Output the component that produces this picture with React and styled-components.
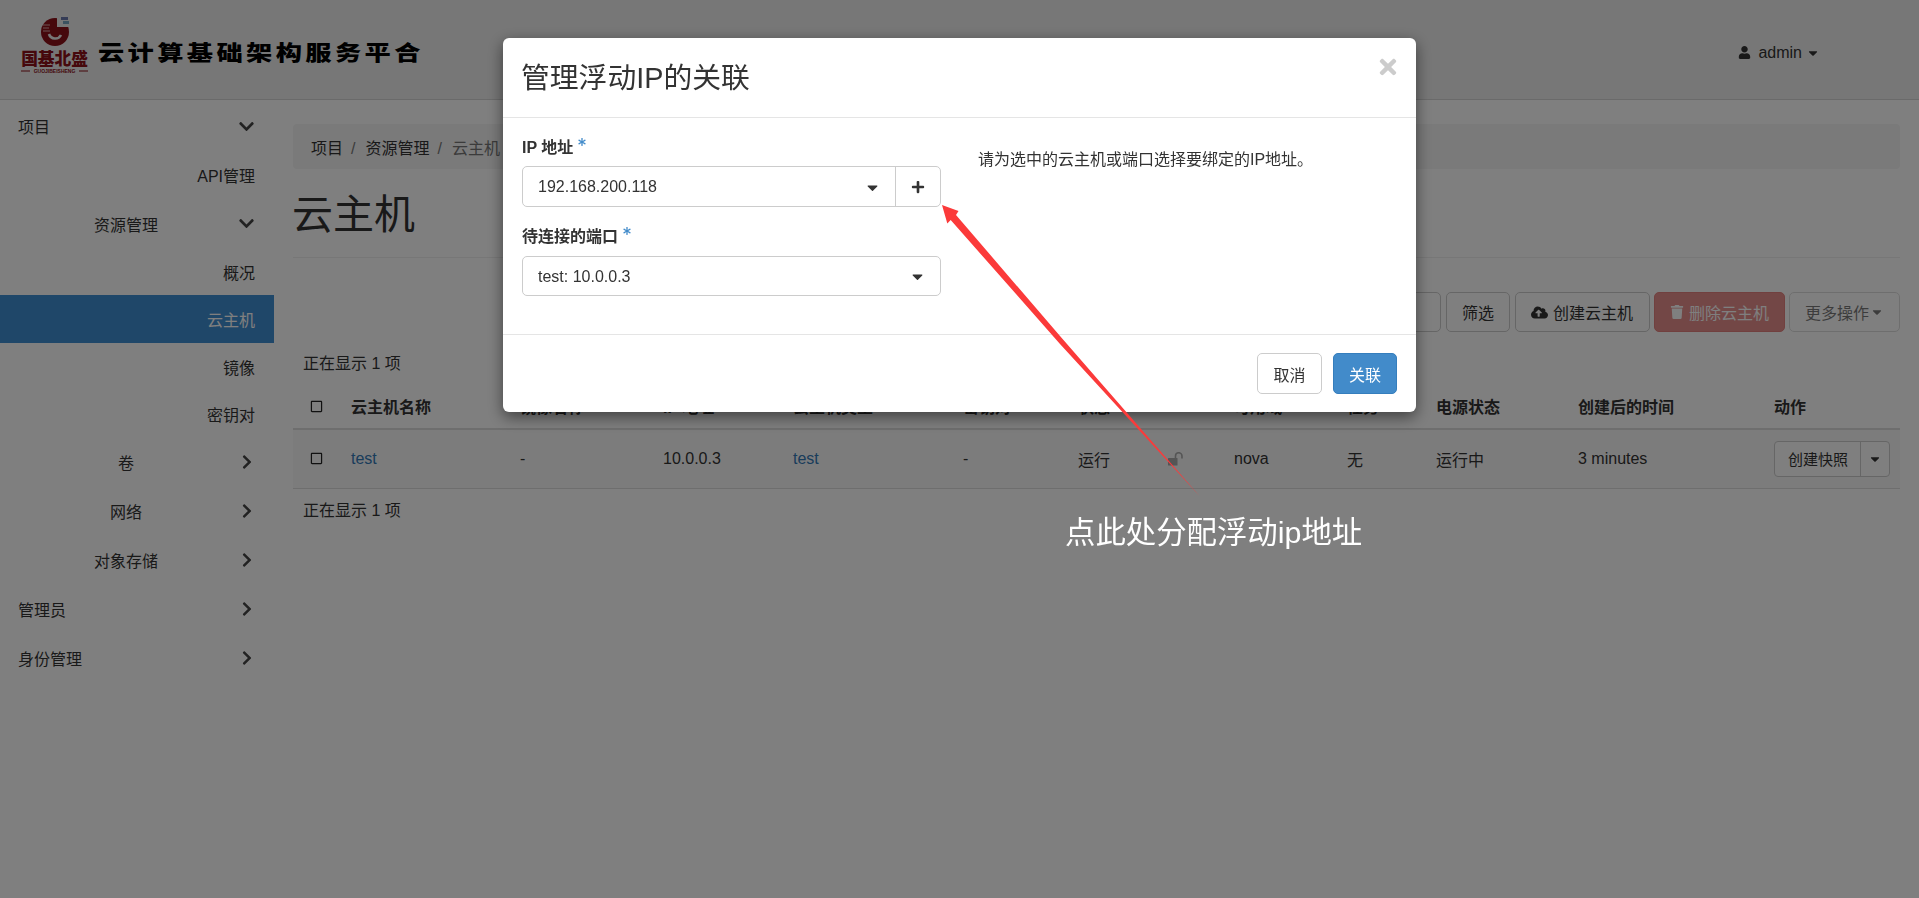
import React from 'react'
import styled, { createGlobalStyle } from 'styled-components'
import {
  FaAsterisk,
  FaCaretDown,
  FaChevronDown,
  FaChevronRight,
  FaCloudUploadAlt,
  FaPlus,
  FaRegSquare,
  FaTimes,
  FaTrash,
  FaUser,
} from 'react-icons/fa'

const GlobalStyle = createGlobalStyle`
  html, body {
    margin: 0;
    height: 100%;
    overflow: hidden;
    background: #fff;
  }
  body {
    font-family: "Liberation Sans", "Noto Sans CJK SC", sans-serif;
    font-size: 16px;
    color: #333;
  }
  * { box-sizing: border-box; }
`

const menu = [
  { label: '项目', level: 0, open: true, h: 48 },
  { label: 'API管理', level: 2, h: 49 },
  { label: '资源管理', level: 1, open: true, h: 49 },
  { label: '概况', level: 2, h: 47 },
  { label: '云主机', level: 2, h: 48, active: true },
  { label: '镜像', level: 2, h: 47 },
  { label: '密钥对', level: 2, h: 47 },
  { label: '卷', level: 1, h: 49 },
  { label: '网络', level: 1, h: 49 },
  { label: '对象存储', level: 1, h: 49 },
  { label: '管理员', level: 0, h: 49 },
  { label: '身份管理', level: 0, h: 50 },
]

const columns = [
  { label: '云主机名称', w: 169 },
  { label: '镜像名称', w: 143 },
  { label: 'IP 地址', w: 130 },
  { label: '云主机类型', w: 170 },
  { label: '密钥对', w: 115 },
  { label: '状态', w: 95 },
  { label: '', w: 61 },
  { label: '可用域', w: 113 },
  { label: '任务', w: 89 },
  { label: '电源状态', w: 142 },
  { label: '创建后的时间', w: 196 },
  { label: '动作', w: 134 },
]

function Logo() {
  return (
    <LogoSvg viewBox="0 0 72 60" width="72" height="60">
      <circle cx="37" cy="17" r="14" fill="#8c1018" />
      <path d="M39 2 h14 v10 h-14z" fill="#eee" />
      <path d="M31 19 A6.5 6.5 0 0 0 43 20" fill="none" stroke="#eee" strokeWidth="2.6" />
      <path d="M25 10 h7 M25 13 h6 M25 16 h7" stroke="#d8a8a8" strokeWidth="1.1" />
      <path d="M43 2 h7 v3 h-7z" fill="#6a78ac" />
      <path d="M45 6 h6 v3 h-6z" fill="#78a4c0" />
      <text x="36.5" y="50" textAnchor="middle" fontSize="16.7" fontWeight="900" fill="#8c1018">国基北盛</text>
      <path d="M3 56 h9 M61 56 h9" stroke="#8c1018" strokeWidth="1" />
      <text x="36.5" y="58" textAnchor="middle" fontSize="5" fontWeight="700" fill="#8c1018">GUOJIBEISHENG</text>
    </LogoSvg>
  )
}

function UnlockIcon() {
  return (
    <LockSvg viewBox="0 0 16 14" width="16" height="14">
      <rect x="0" y="6" width="9.5" height="7.5" rx="0.5" fill="currentColor" />
      <path d="M7.5 6 V4 A3.2 3.2 0 0 1 14 4 V6.5" fill="none" stroke="currentColor" strokeWidth="1.6" />
    </LockSvg>
  )
}

function App() {
  return (
    <Page>
      <GlobalStyle />
      <Header>
        <Brand>
          <Logo />
          <BrandName>云计算基础架构服务平合</BrandName>
        </Brand>
        <UserMenu>
          <UserIcon size={13} />
          admin
          <FaCaretDown size={14} />
        </UserMenu>
      </Header>

      <Body>
        <Sidebar>
          {menu.map((item) => (
            <MenuItem key={item.label} $h={item.h} $active={item.active}>
              <MenuLabel $level={item.level}>{item.label}</MenuLabel>
              {item.level < 2 && (
                <MenuChevron>
                  {item.open ? <FaChevronDown size={17} /> : <FaChevronRight size={16} />}
                </MenuChevron>
              )}
            </MenuItem>
          ))}
        </Sidebar>

        <Main>
          <Breadcrumb>
            <Crumb>项目</Crumb>
            <Crumb>资源管理</Crumb>
            <Crumb $last>云主机</Crumb>
          </Breadcrumb>
          <PageTitle>云主机</PageTitle>

          <Toolbar>
            <SearchInput />
            <Button $after={1}>筛选</Button>
            <Button $right={16}><FaCloudUploadAlt size={17} />创建云主机</Button>
            <Button $danger><FaTrash size={14} />删除云主机</Button>
            <Button $disabled $gap={1}>更多操作<FaCaretDown size={14} /></Button>
          </Toolbar>

          <Summary>正在显示 1 项</Summary>
          <Table>
            <thead>
              <tr>
                <CheckCell as="th"><FaRegSquare size={13} /></CheckCell>
                {columns.map((col) => (
                  <HeadCell key={col.label + col.w} style={{ width: col.w }}>{col.label}</HeadCell>
                ))}
              </tr>
            </thead>
            <tbody>
              <Row>
                <CheckCell><FaRegSquare size={13} /></CheckCell>
                <Cell><CellLink>test</CellLink></Cell>
                <Cell>-</Cell>
                <Cell>10.0.0.3</Cell>
                <Cell><CellLink>test</CellLink></Cell>
                <Cell>-</Cell>
                <Cell>运行</Cell>
                <Cell><UnlockIcon /></Cell>
                <Cell>nova</Cell>
                <Cell>无</Cell>
                <Cell>运行中</Cell>
                <Cell>3 minutes</Cell>
                <Cell>
                  <SplitButton>
                    <SplitMain>创建快照</SplitMain>
                    <SplitCaret><FaCaretDown size={14} /></SplitCaret>
                  </SplitButton>
                </Cell>
              </Row>
            </tbody>
          </Table>
          <Summary $below>正在显示 1 项</Summary>
        </Main>
      </Body>

      <Backdrop />

      <Modal>
        <ModalHeader>
          <ModalTitle>管理浮动IP的关联</ModalTitle>
          <CloseIcon size={24} />
        </ModalHeader>
        <ModalBody>
          <FormColumn>
            <FieldLabel>IP 地址<Star size={8} /></FieldLabel>
            <SelectGroup>
              <SelectBox>
                192.168.200.118
                <FaCaretDown size={17} />
              </SelectBox>
              <AddButton><FaPlus size={14} /></AddButton>
            </SelectGroup>
            <FieldLabel $second>待连接的端口<Star size={8} /></FieldLabel>
            <SelectGroup $short>
              <SelectBox>
                test: 10.0.0.3
                <FaCaretDown size={17} />
              </SelectBox>
            </SelectGroup>
          </FormColumn>
          <HelpText>请为选中的云主机或端口选择要绑定的IP地址。</HelpText>
        </ModalBody>
        <ModalFooter>
          <FooterButton>取消</FooterButton>
          <FooterButton $primary>关联</FooterButton>
        </ModalFooter>
      </Modal>

      <ArrowSvg width="1919" height="898" viewBox="0 0 1919 898">
        <polygon
          points="942,205 958.5,211 956,215 1060,336 1199.5,496 1060,344 950.7,220 947.3,223.5"
          fill="#fb3a3a"
        />
      </ArrowSvg>
      <Annotation>点此处分配浮动ip地址</Annotation>
    </Page>
  )
}

const Page = styled.div`
  min-height: 100vh;
`

const Header = styled.header`
  height: 100px;
  display: flex;
  align-items: center;
  justify-content: space-between;
  padding: 0 99px 0 18px;
  background: #eee;
  border-bottom: 1px solid #d5d5d5;
`

const Brand = styled.div`
  display: flex;
  align-items: center;
  gap: 9px;
`

const LogoSvg = styled.svg`
  display: block;
  margin-top: -9px;
`

const BrandName = styled.span`
  display: inline-block;
  font-family: "Noto Sans CJK SC", sans-serif;
  font-size: 21px;
  font-weight: 900;
  letter-spacing: 2.7px;
  color: #000;
  margin-top: 3px;
  margin-left: -1px;
  transform: scaleX(1.25);
  transform-origin: left center;
`

const UserMenu = styled.div`
  display: flex;
  align-items: center;
  gap: 4px;
  margin-top: 6px;
  color: #333;
`

const UserIcon = styled(FaUser)`
  margin-right: 3px;
`

const Body = styled.div`
  display: flex;
`

const Sidebar = styled.nav`
  width: 274px;
  flex-shrink: 0;
  padding-top: 2px;
`

const MenuItem = styled.div`
  height: ${(p) => p.$h}px;
  display: flex;
  align-items: center;
  padding: 0 19px 0 18px;
  color: ${(p) => (p.$active ? '#fff' : '#333')};
  background: ${(p) => (p.$active ? '#3e8ed2' : 'transparent')};
`

const MenuLabel = styled.span`
  flex: 1;
  text-align: ${(p) => (p.$level === 2 ? 'right' : p.$level === 1 ? 'center' : 'left')};
  padding-right: ${(p) => (p.$level === 1 ? '4px' : '0')};
`

const MenuChevron = styled.span`
  display: flex;
  width: 17px;
  justify-content: center;
  color: #444;
`

const Main = styled.main`
  flex: 1;
  min-width: 0;
  padding: 24px 19px 0;
`

const Breadcrumb = styled.div`
  height: 45px;
  display: flex;
  align-items: center;
  gap: 10px;
  padding: 0 18px;
  background: #f5f5f5;
  border-radius: 4px;
`

const Crumb = styled.span`
  color: ${(p) => (p.$last ? '#777' : '#333')};
  ${(p) => !p.$last && `
    &::after {
      content: '/';
      color: #777;
      margin-left: 8px;
    }
  `}
`

const PageTitle = styled.h1`
  margin: 21px 0 0;
  height: 68px;
  font-size: 41px;
  font-weight: 400;
  line-height: 50px;
  text-indent: -1px;
  color: #333;
  border-bottom: 1px solid #eee;
`

const Toolbar = styled.div`
  margin-top: 34px;
  display: flex;
  justify-content: flex-end;
  gap: 4px;
`

const SearchInput = styled.div`
  width: 240px;
  height: 40px;
  margin-right: 1px;
  border: 1px solid #ccc;
  border-radius: 5px;
  background: #fff;
`

const Button = styled.div`
  height: 40px;
  display: flex;
  align-items: center;
  gap: ${(p) => p.$gap ?? 5}px;
  padding: 0 ${(p) => p.$right ?? 15}px 0 15px;
  margin-right: ${(p) => p.$after ?? 0}px;
  background: ${(p) => (p.$danger ? '#d9534f' : '#fff')};
  color: ${(p) => (p.$danger ? '#fff' : '#333')};
  border: 1px solid ${(p) => (p.$danger ? '#d43f3a' : '#ccc')};
  border-radius: 5px;
  opacity: ${(p) => (p.$danger || p.$disabled ? 0.65 : 1)};
`

const Summary = styled.div`
  height: 24px;
  line-height: 24px;
  padding-left: 10px;
  margin-top: ${(p) => (p.$below ? '10px' : '20px')};
`

const Table = styled.table`
  width: 100%;
  margin-top: 16px;
  border-collapse: collapse;
  table-layout: fixed;
`

const Cell = styled.td`
  height: 59px;
  padding: 0 8px;
  border-bottom: 1px solid #ddd;
  text-align: left;
  vertical-align: middle;
`

const HeadCell = styled.th`
  height: 37px;
  padding: 0 8px 8px;
  border-bottom: 2px solid #ddd;
  text-align: left;
  font-weight: 700;
  vertical-align: middle;
  white-space: nowrap;
`

const CheckCell = styled.td`
  width: 50px;
  padding: ${(p) => (p.as === 'th' ? '0 0 8px 17px' : '0 0 0 17px')};
  border-bottom: ${(p) => (p.as === 'th' ? '2px' : '1px')} solid #ddd;
  text-align: left;
  vertical-align: middle;
  color: #222;

  svg {
    display: block;
  }
`

const Row = styled.tr`
  background: #f9f9f9;
`

const CellLink = styled.span`
  color: #337ab7;
`

const LockSvg = styled.svg`
  display: block;
  margin-left: -5px;
  color: #aaa;
`

const SplitButton = styled.div`
  display: inline-flex;
  height: 36px;
  border: 1px solid #ccc;
  border-radius: 4px;
  background: #fff;
  font-size: 15px;
  white-space: nowrap;
`

const SplitMain = styled.span`
  display: flex;
  align-items: center;
  padding: 0 12px 0 13px;
  border-right: 1px solid #ccc;
`

const SplitCaret = styled.span`
  display: flex;
  align-items: center;
  padding: 0 7px;
`

const Backdrop = styled.div`
  position: fixed;
  inset: 0;
  background: rgba(0, 0, 0, 0.5);
`

const Modal = styled.div`
  position: fixed;
  top: 38px;
  left: 503px;
  width: 913px;
  height: 374px;
  display: flex;
  flex-direction: column;
  background: #fff;
  border-radius: 6px;
  box-shadow: 0 5px 15px rgba(0, 0, 0, 0.5);
`

const ModalHeader = styled.div`
  height: 80px;
  flex-shrink: 0;
  display: flex;
  align-items: center;
  justify-content: space-between;
  padding: 0 20px;
  border-bottom: 1px solid #e5e5e5;
`

const ModalTitle = styled.h4`
  margin: -4px 0 0 -2px;
  font-size: 28.8px;
  font-weight: 400;
  color: #333;
`

const CloseIcon = styled(FaTimes)`
  color: #ccc;
  margin: -22px -4px 0 0;
`

const ModalBody = styled.div`
  flex: 1;
  display: flex;
  padding: 20px 19px 0;
`

const FormColumn = styled.div`
  width: 419px;
  flex-shrink: 0;
`

const FieldLabel = styled.div`
  height: 20px;
  line-height: 20px;
  display: flex;
  align-items: flex-start;
  font-weight: 700;
  color: #333;
  margin-top: ${(p) => (p.$second ? '20px' : '0')};
`

const Star = styled(FaAsterisk)`
  color: #428bca;
  margin-left: 5px;
`

const SelectGroup = styled.div`
  margin-top: ${(p) => (p.$short ? '9px' : '8px')};
  height: ${(p) => (p.$short ? '40px' : '41px')};
  display: flex;
  border: 1px solid #ccc;
  border-radius: 5px;
  background: #fff;
`

const SelectBox = styled.div`
  flex: 1;
  display: flex;
  align-items: center;
  justify-content: space-between;
  padding: 1px 14px 0 15px;
  color: #333;
`

const AddButton = styled.div`
  width: 45px;
  display: flex;
  align-items: center;
  justify-content: center;
  border-left: 1px solid #ccc;
  color: #333;
`

const HelpText = styled.p`
  margin: 11px 0 0 37px;
  line-height: 22px;
  color: #333;
`

const ModalFooter = styled.div`
  height: 78px;
  flex-shrink: 0;
  display: flex;
  justify-content: flex-end;
  gap: 11px;
  padding: 18px 19px;
  border-top: 1px solid #e5e5e5;
`

const FooterButton = styled.div`
  width: ${(p) => (p.$primary ? '64px' : '65px')};
  height: 41px;
  display: flex;
  align-items: center;
  justify-content: center;
  border: 1px solid ${(p) => (p.$primary ? '#357ebd' : '#ccc')};
  border-radius: 5px;
  background: ${(p) => (p.$primary ? '#428bca' : '#fff')};
  color: ${(p) => (p.$primary ? '#fff' : '#333')};
`

const ArrowSvg = styled.svg`
  position: fixed;
  inset: 0;
  pointer-events: none;
`

const Annotation = styled.div`
  position: fixed;
  left: 1065px;
  top: 512px;
  font-size: 30.4px;
  line-height: 40px;
  color: #fff;
  white-space: nowrap;
`

export default App
